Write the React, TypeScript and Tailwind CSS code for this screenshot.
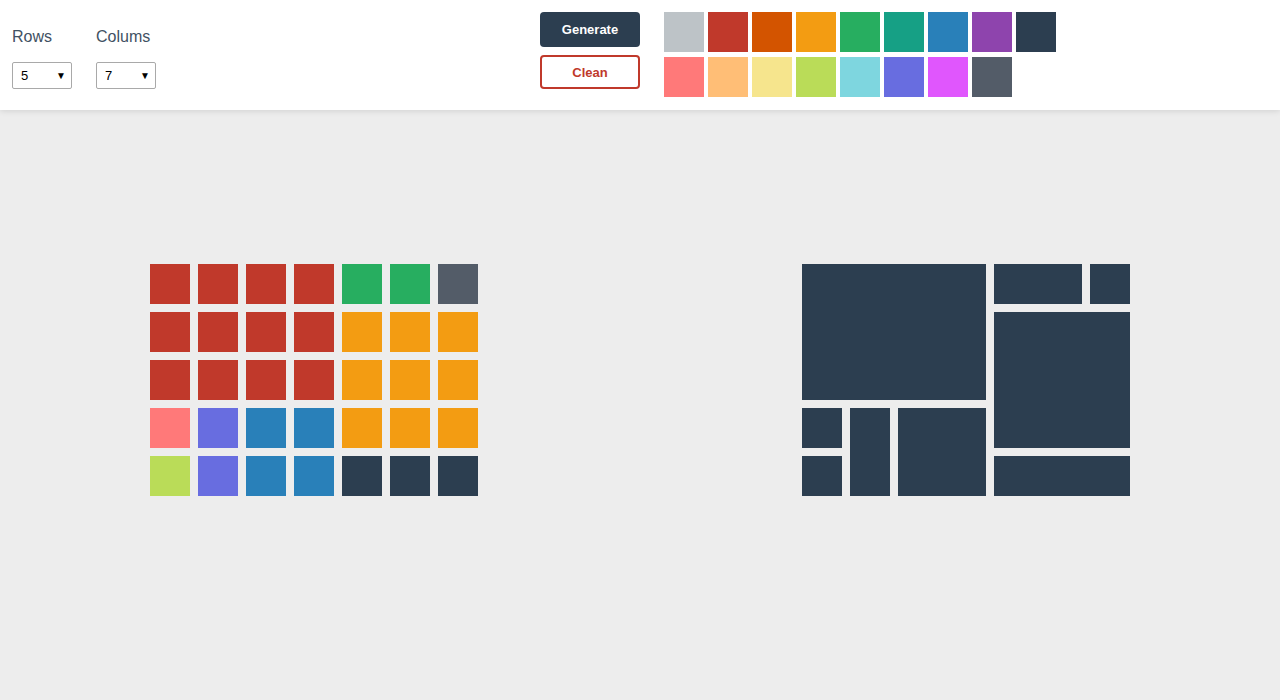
import React, { useState } from 'react';

const palette = [
  ['#bdc3c7', '#c0392b', '#d35400', '#f39c12', '#27ae60', '#16a085', '#2980b9', '#8e44ad', '#2c3e50'],
  ['#ff7979', '#ffbe76', '#f6e58d', '#badc58', '#7ed6df', '#686de0', '#e056fd', '#535c68'],
];

const R = '#c0392b';
const G = '#27ae60';
const Y = '#f39c12';
const D = '#2c3e50';
const S = '#535c68';
const B = '#2980b9';
const P = '#686de0';

const cells = [
  [R, R, R, R, G, G, S],
  [R, R, R, R, Y, Y, Y],
  [R, R, R, R, Y, Y, Y],
  ['#ff7979', P, B, B, Y, Y, Y],
  ['#badc58', P, B, B, D, D, D],
];

// merged blocks on the right preview
const blocks = [
  'col-start-1 col-span-4 row-start-1 row-span-3',
  'col-start-5 col-span-2 row-start-1',
  'col-start-7 row-start-1',
  'col-start-5 col-span-3 row-start-2 row-span-3',
  'col-start-1 row-start-4',
  'col-start-1 row-start-5',
  'col-start-2 row-start-4 row-span-2',
  'col-start-3 col-span-2 row-start-4 row-span-2',
  'col-start-5 col-span-3 row-start-5',
];

function Picker({ label, value, onChange }: { label: string; value: string; onChange: (v: string) => void }) {
  return (
    <div className="flex flex-col">
      <label className="text-[16px] text-[#3f5163] leading-none mt-[29px]">{label}</label>
      <div className="relative mt-[17px] w-[60px] h-[27px]">
        <select
          value={value}
          onChange={(e) => onChange(e.target.value)}
          className="appearance-none w-full h-full border border-[#a9a9a9] rounded-[2px] bg-white pl-[8px] text-[13px] text-black outline-none"
        >
          {[1, 2, 3, 4, 5, 6, 7, 8, 9, 10].map((n) => (
            <option key={n} value={n}>
              {n}
            </option>
          ))}
        </select>
        <span className="pointer-events-none absolute right-[6px] top-[6px] text-[10px] text-black">▼</span>
      </div>
    </div>
  );
}

export default function App() {
  const [rows, setRows] = useState('5');
  const [cols, setCols] = useState('7');

  return (
    <div className="min-h-[700px] bg-[#ededed] font-['Liberation_Sans',Arial,sans-serif]">
      {/* Toolbar */}
      <header className="h-[110px] bg-white shadow-[0_1px_6px_rgba(0,0,0,0.12)] flex pl-[12px]">
        <div className="flex gap-[24px]">
          <Picker label="Rows" value={rows} onChange={setRows} />
          <Picker label="Colums" value={cols} onChange={setCols} />
        </div>

        <div className="ml-[384px] mt-[12px] flex flex-col gap-[8px]">
          <button className="w-[100px] h-[35px] rounded-[4px] bg-[#2c3e50] text-white text-[13px] font-bold">
            Generate
          </button>
          <button className="w-[100px] h-[34px] pt-[2px] rounded-[4px] border-2 border-[#c0392b] bg-white text-[#c0392b] text-[13px] font-bold">
            Clean
          </button>
        </div>

        <div className="ml-[24px] mt-[12px] flex flex-col gap-[5px]">
          {palette.map((row, i) => (
            <div key={i} className="flex gap-[4px]">
              {row.map((c) => (
                <div key={c} className="w-[40px] h-[40px]" style={{ backgroundColor: c }} />
              ))}
            </div>
          ))}
        </div>
      </header>

      {/* Boards */}
      <main className="flex pt-[154px] pl-[150px] gap-[324px]">
        <div className="grid grid-cols-[repeat(7,40px)] grid-rows-[repeat(5,40px)] gap-[8px]">
          {cells.flat().map((c, i) => (
            <div key={i} style={{ backgroundColor: c }} />
          ))}
        </div>

        <div className="grid grid-cols-[repeat(7,40px)] grid-rows-[repeat(5,40px)] gap-[8px]">
          {blocks.map((b, i) => (
            <div key={i} className={`bg-[#2c3e50] ${b}`} />
          ))}
        </div>
      </main>
    </div>
  );
}
